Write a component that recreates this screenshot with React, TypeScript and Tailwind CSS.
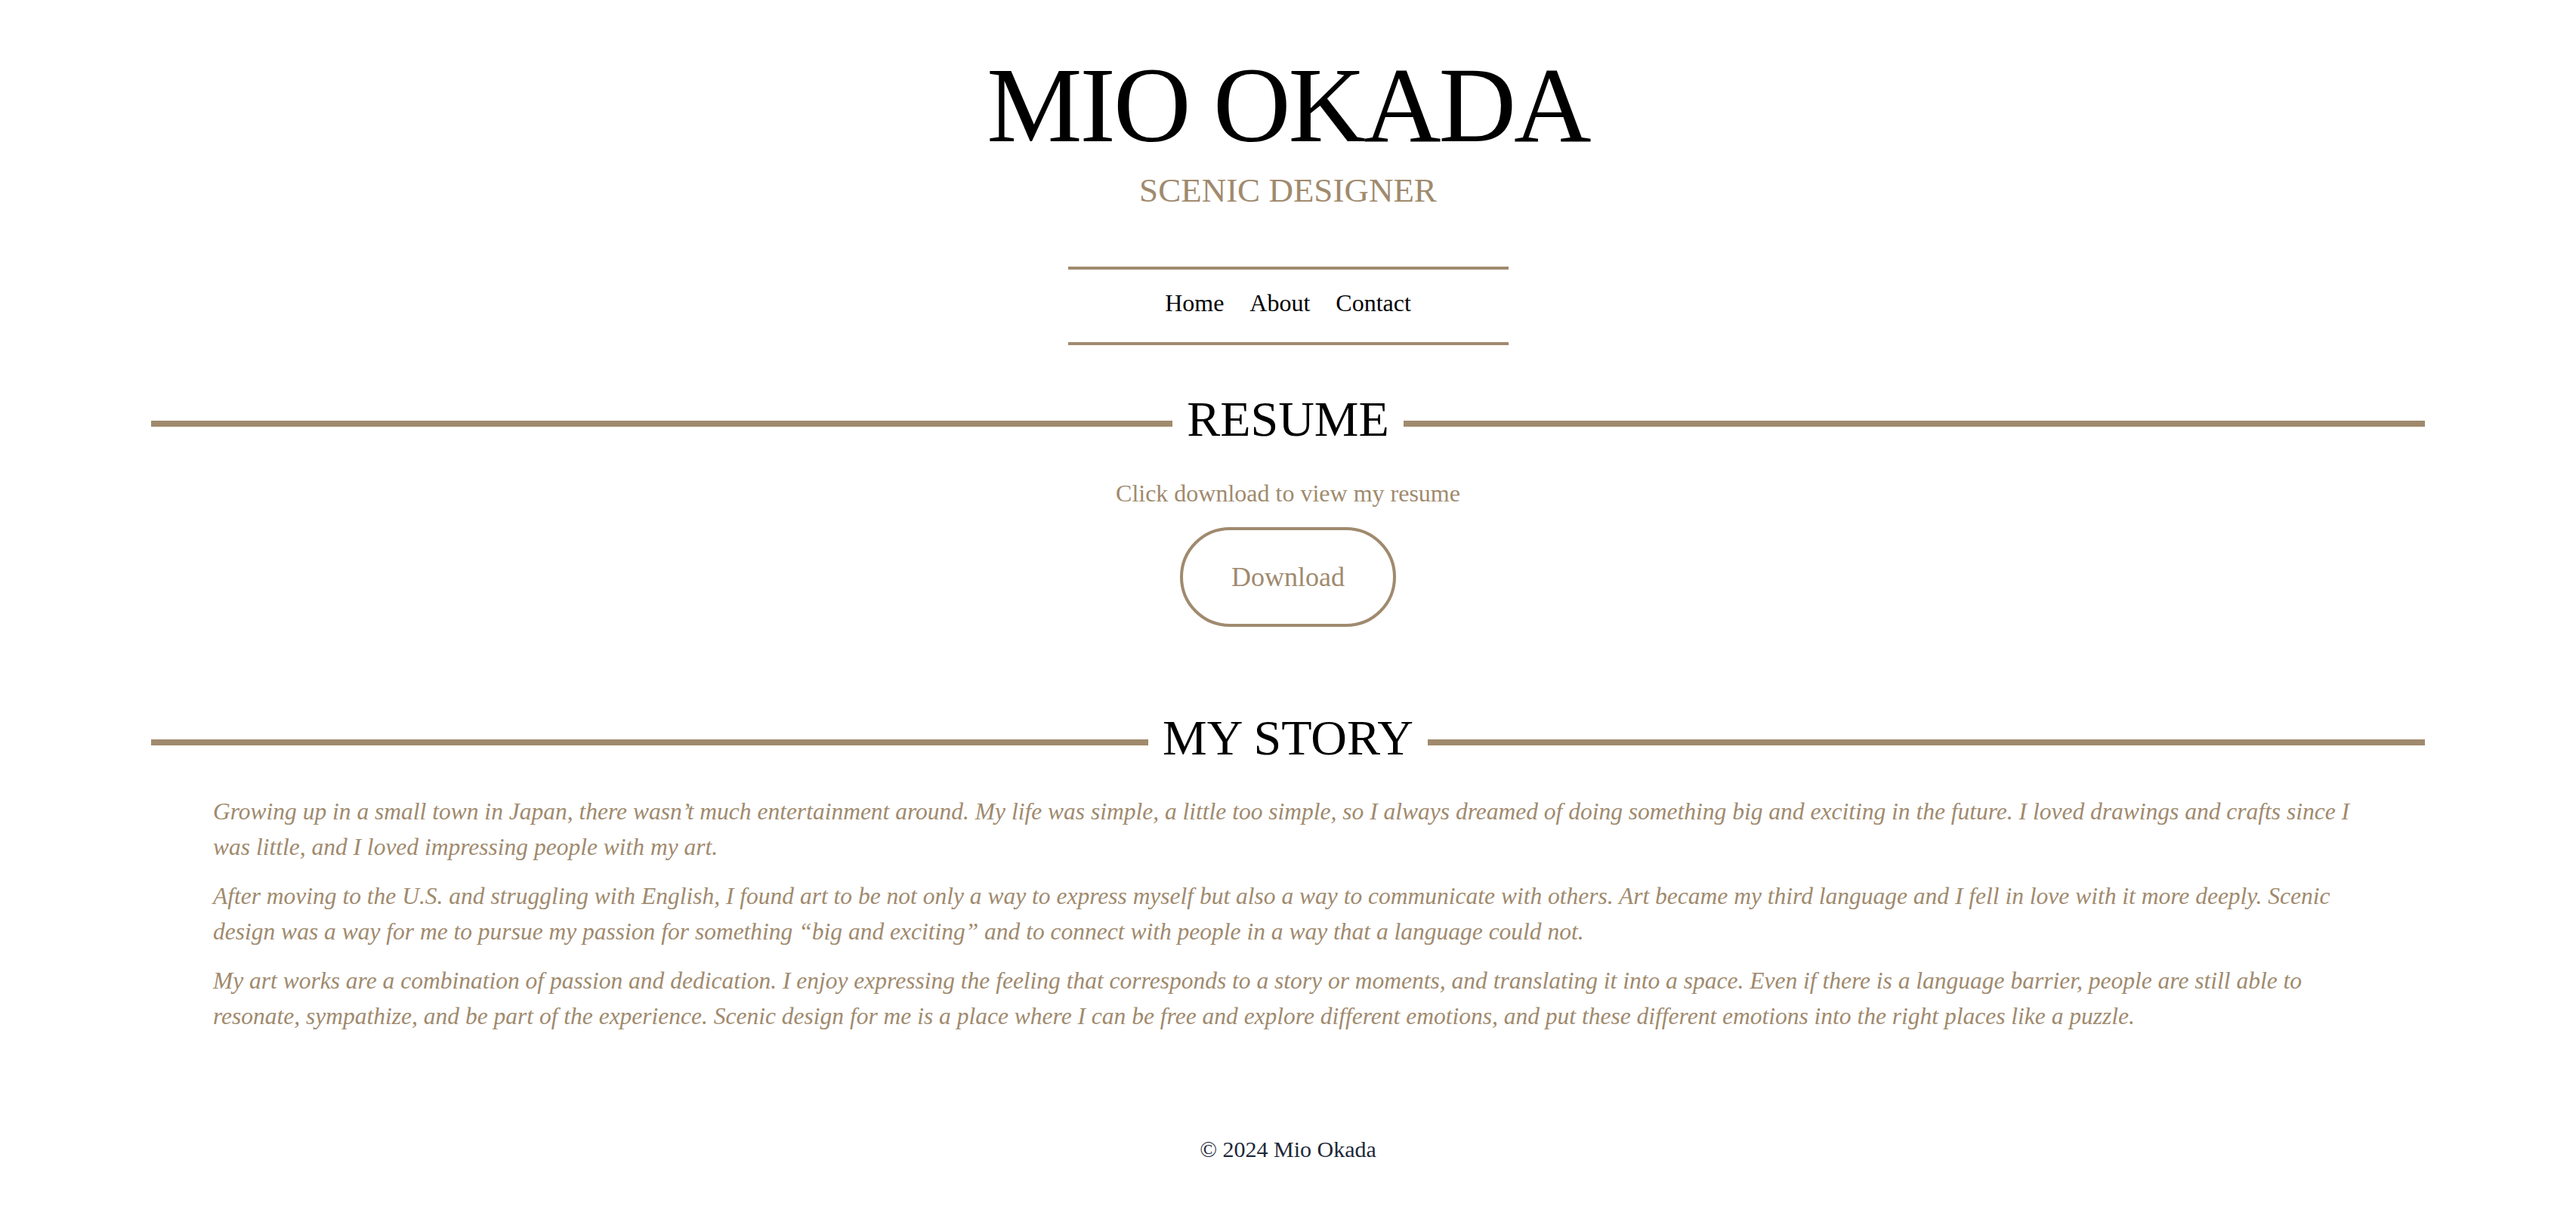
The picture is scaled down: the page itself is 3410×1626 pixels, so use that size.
const brown = "text-[#a08a6e]";

const SectionTitle = ({ title }: { title: string }) => {
  return (
    <div className="flex items-center px-[200px]">
      <div className="flex-1 h-[8px] mt-[12px] bg-[#a08a6e]" />
      <h2 className="mx-[19px] text-[66px] leading-none text-black">{title}</h2>
      <div className="flex-1 h-[8px] mt-[12px] bg-[#a08a6e]" />
    </div>
  );
};

const App = () => {
  return (
    <div className="min-h-screen bg-white font-[family-name:'Liberation_Serif',serif]">
      <header className="flex flex-col items-center pt-[68px]">
        <h1 className="text-[142px] leading-none tracking-[-3px] text-black">MIO OKADA</h1>
        <p className={`mt-[20px] text-[45px] leading-none ${brown}`}>SCENIC DESIGNER</p>
        <nav className="mt-[78px] w-[583px] border-y-4 border-[#a08a6e] pt-[28px] pb-[36px]">
          <ul className="flex justify-center gap-[34px] text-[32px] leading-none text-black">
            <li><a href="#">Home</a></li>
            <li><a href="#">About</a></li>
            <li><a href="#">Contact</a></li>
          </ul>
        </nav>
      </header>

      <section className="mt-[65px]">
        <SectionTitle title="RESUME" />
        <div className="flex flex-col items-center">
          <p className={`mt-[49px] text-[32px] leading-none ${brown}`}>Click download to view my resume</p>
          <button className={`mt-[29px] rounded-full border-4 border-[#a08a6e] px-[64px] py-[44px] text-[36px] leading-none ${brown}`}>
            Download
          </button>
        </div>
      </section>

      <section className="mt-[114px]">
        <SectionTitle title="MY STORY" />
        <div className={`mt-[41px] px-[282px] text-[31.5px] leading-[47px] italic ${brown}`}>
          <p className="mb-[18px]">
            Growing up in a small town in Japan, there wasn’t much entertainment around. My life was simple, a little too simple, so I always dreamed of doing something big and exciting in the future. I loved drawings and crafts since I was little, and I loved impressing people with my art.
          </p>
          <p className="mb-[18px]">
            After moving to the U.S. and struggling with English, I found art to be not only a way to express myself but also a way to communicate with others. Art became my third language and I fell in love with it more deeply. Scenic design was a way for me to pursue my passion for something “big and exciting” and to connect with people in a way that a language could not.
          </p>
          <p>
            My art works are a combination of passion and dedication. I enjoy expressing the feeling that corresponds to a story or moments, and translating it into a space. Even if there is a language barrier, people are still able to resonate, sympathize, and be part of the experience. Scenic design for me is a place where I can be free and explore different emotions, and put these different emotions into the right places like a puzzle.
          </p>
        </div>
      </section>

      <footer className="mt-[138px] pb-[80px] text-center text-[30px] leading-none text-gray-800">
        © 2024 Mio Okada
      </footer>
    </div>
  );
};

export default App;
